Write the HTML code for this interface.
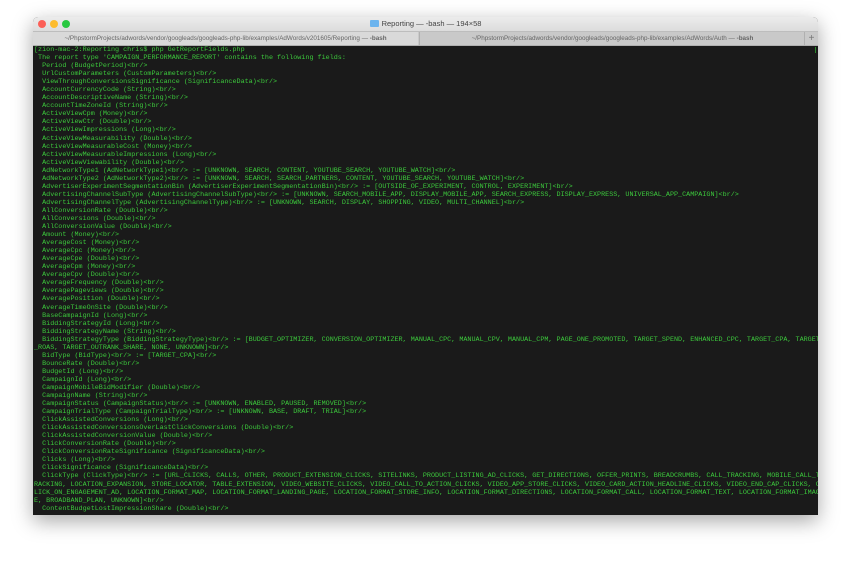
<!DOCTYPE html>
<html><head><meta charset="utf-8"><style>
html,body{margin:0;padding:0;background:#fff;width:850px;height:561px;overflow:hidden;}
.win{position:absolute;left:33px;top:17px;width:785px;height:498px;background:#1a1a1a;border-radius:5px 5px 0 0;box-shadow:0 6px 20px rgba(0,0,0,0.35);overflow:hidden;}
.title{position:absolute;left:0;top:0;width:785px;height:14px;background:linear-gradient(#ececec,#dcdcdc);font:7.5px "Liberation Sans",sans-serif;color:#444;text-align:center;line-height:14px;}
.dot{position:absolute;top:3px;width:8px;height:8px;border-radius:50%;}
.tabs{position:absolute;left:0;top:14px;width:785px;height:13px;background:#c9c9c9;border-top:1px solid #bdbdbd;border-bottom:1px solid #b0b0b0;font:6.3px "Liberation Sans",sans-serif;color:#666;line-height:13px;}
.tab1{position:absolute;left:0;top:0;width:385px;height:13px;background:#d9d9d9;text-align:center;}
.tab2{position:absolute;left:386px;top:0;width:385px;height:13px;text-align:center;border-left:1px solid #b0b0b0;}
.plus{position:absolute;right:0;top:0;width:13px;height:13px;text-align:center;font-size:10px;color:#777;border-left:1px solid #b0b0b0;}
.term{position:absolute;left:1px;top:29px;width:790px;margin:0;font:6.75px/8.04px "Liberation Mono",monospace;color:#3cc83c;white-space:pre;}
.cur{position:absolute;right:2px;top:30px;width:1px;height:6px;background:#2a8a2a;}
</style></head><body>
<div class="win">
<div class="title"><span class="dot" style="left:5px;background:#fc5f57"></span><span class="dot" style="left:17px;background:#fdbc2e"></span><span class="dot" style="left:29px;background:#28c840"></span><span style="display:inline-block;width:9px;height:7px;background:#6cb4ee;vertical-align:-1px;margin-right:3px;border-radius:1px"></span>Reporting — -bash — 194×58</div>
<div class="tabs"><div class="tab1">~/PhpstormProjects/adwords/vendor/googleads/googleads-php-lib/examples/AdWords/v201605/Reporting — <b>-bash</b></div><div class="tab2">~/PhpstormProjects/adwords/vendor/googleads/googleads-php-lib/examples/AdWords/Auth — <b>-bash</b></div><div class="plus">+</div></div>
<div class="cur"></div>
<pre class="term">[zion-mac-2:Reporting chris$ php GetReportFields.php
 The report type 'CAMPAIGN_PERFORMANCE_REPORT' contains the following fields:
  Period (BudgetPeriod)&lt;br/&gt;
  UrlCustomParameters (CustomParameters)&lt;br/&gt;
  ViewThroughConversionsSignificance (SignificanceData)&lt;br/&gt;
  AccountCurrencyCode (String)&lt;br/&gt;
  AccountDescriptiveName (String)&lt;br/&gt;
  AccountTimeZoneId (String)&lt;br/&gt;
  ActiveViewCpm (Money)&lt;br/&gt;
  ActiveViewCtr (Double)&lt;br/&gt;
  ActiveViewImpressions (Long)&lt;br/&gt;
  ActiveViewMeasurability (Double)&lt;br/&gt;
  ActiveViewMeasurableCost (Money)&lt;br/&gt;
  ActiveViewMeasurableImpressions (Long)&lt;br/&gt;
  ActiveViewViewability (Double)&lt;br/&gt;
  AdNetworkType1 (AdNetworkType1)&lt;br/&gt; := [UNKNOWN, SEARCH, CONTENT, YOUTUBE_SEARCH, YOUTUBE_WATCH]&lt;br/&gt;
  AdNetworkType2 (AdNetworkType2)&lt;br/&gt; := [UNKNOWN, SEARCH, SEARCH_PARTNERS, CONTENT, YOUTUBE_SEARCH, YOUTUBE_WATCH]&lt;br/&gt;
  AdvertiserExperimentSegmentationBin (AdvertiserExperimentSegmentationBin)&lt;br/&gt; := [OUTSIDE_OF_EXPERIMENT, CONTROL, EXPERIMENT]&lt;br/&gt;
  AdvertisingChannelSubType (AdvertisingChannelSubType)&lt;br/&gt; := [UNKNOWN, SEARCH_MOBILE_APP, DISPLAY_MOBILE_APP, SEARCH_EXPRESS, DISPLAY_EXPRESS, UNIVERSAL_APP_CAMPAIGN]&lt;br/&gt;
  AdvertisingChannelType (AdvertisingChannelType)&lt;br/&gt; := [UNKNOWN, SEARCH, DISPLAY, SHOPPING, VIDEO, MULTI_CHANNEL]&lt;br/&gt;
  AllConversionRate (Double)&lt;br/&gt;
  AllConversions (Double)&lt;br/&gt;
  AllConversionValue (Double)&lt;br/&gt;
  Amount (Money)&lt;br/&gt;
  AverageCost (Money)&lt;br/&gt;
  AverageCpc (Money)&lt;br/&gt;
  AverageCpe (Double)&lt;br/&gt;
  AverageCpm (Money)&lt;br/&gt;
  AverageCpv (Double)&lt;br/&gt;
  AverageFrequency (Double)&lt;br/&gt;
  AveragePageviews (Double)&lt;br/&gt;
  AveragePosition (Double)&lt;br/&gt;
  AverageTimeOnSite (Double)&lt;br/&gt;
  BaseCampaignId (Long)&lt;br/&gt;
  BiddingStrategyId (Long)&lt;br/&gt;
  BiddingStrategyName (String)&lt;br/&gt;
  BiddingStrategyType (BiddingStrategyType)&lt;br/&gt; := [BUDGET_OPTIMIZER, CONVERSION_OPTIMIZER, MANUAL_CPC, MANUAL_CPV, MANUAL_CPM, PAGE_ONE_PROMOTED, TARGET_SPEND, ENHANCED_CPC, TARGET_CPA, TARGET
_ROAS, TARGET_OUTRANK_SHARE, NONE, UNKNOWN]&lt;br/&gt;
  BidType (BidType)&lt;br/&gt; := [TARGET_CPA]&lt;br/&gt;
  BounceRate (Double)&lt;br/&gt;
  BudgetId (Long)&lt;br/&gt;
  CampaignId (Long)&lt;br/&gt;
  CampaignMobileBidModifier (Double)&lt;br/&gt;
  CampaignName (String)&lt;br/&gt;
  CampaignStatus (CampaignStatus)&lt;br/&gt; := [UNKNOWN, ENABLED, PAUSED, REMOVED]&lt;br/&gt;
  CampaignTrialType (CampaignTrialType)&lt;br/&gt; := [UNKNOWN, BASE, DRAFT, TRIAL]&lt;br/&gt;
  ClickAssistedConversions (Long)&lt;br/&gt;
  ClickAssistedConversionsOverLastClickConversions (Double)&lt;br/&gt;
  ClickAssistedConversionValue (Double)&lt;br/&gt;
  ClickConversionRate (Double)&lt;br/&gt;
  ClickConversionRateSignificance (SignificanceData)&lt;br/&gt;
  Clicks (Long)&lt;br/&gt;
  ClickSignificance (SignificanceData)&lt;br/&gt;
  ClickType (ClickType)&lt;br/&gt; := [URL_CLICKS, CALLS, OTHER, PRODUCT_EXTENSION_CLICKS, SITELINKS, PRODUCT_LISTING_AD_CLICKS, GET_DIRECTIONS, OFFER_PRINTS, BREADCRUMBS, CALL_TRACKING, MOBILE_CALL_T
RACKING, LOCATION_EXPANSION, STORE_LOCATOR, TABLE_EXTENSION, VIDEO_WEBSITE_CLICKS, VIDEO_CALL_TO_ACTION_CLICKS, VIDEO_APP_STORE_CLICKS, VIDEO_CARD_ACTION_HEADLINE_CLICKS, VIDEO_END_CAP_CLICKS, C
LICK_ON_ENGAGEMENT_AD, LOCATION_FORMAT_MAP, LOCATION_FORMAT_LANDING_PAGE, LOCATION_FORMAT_STORE_INFO, LOCATION_FORMAT_DIRECTIONS, LOCATION_FORMAT_CALL, LOCATION_FORMAT_TEXT, LOCATION_FORMAT_IMAG
E, BROADBAND_PLAN, UNKNOWN]&lt;br/&gt;
  ContentBudgetLostImpressionShare (Double)&lt;br/&gt;</pre>
</div>
</body></html>
